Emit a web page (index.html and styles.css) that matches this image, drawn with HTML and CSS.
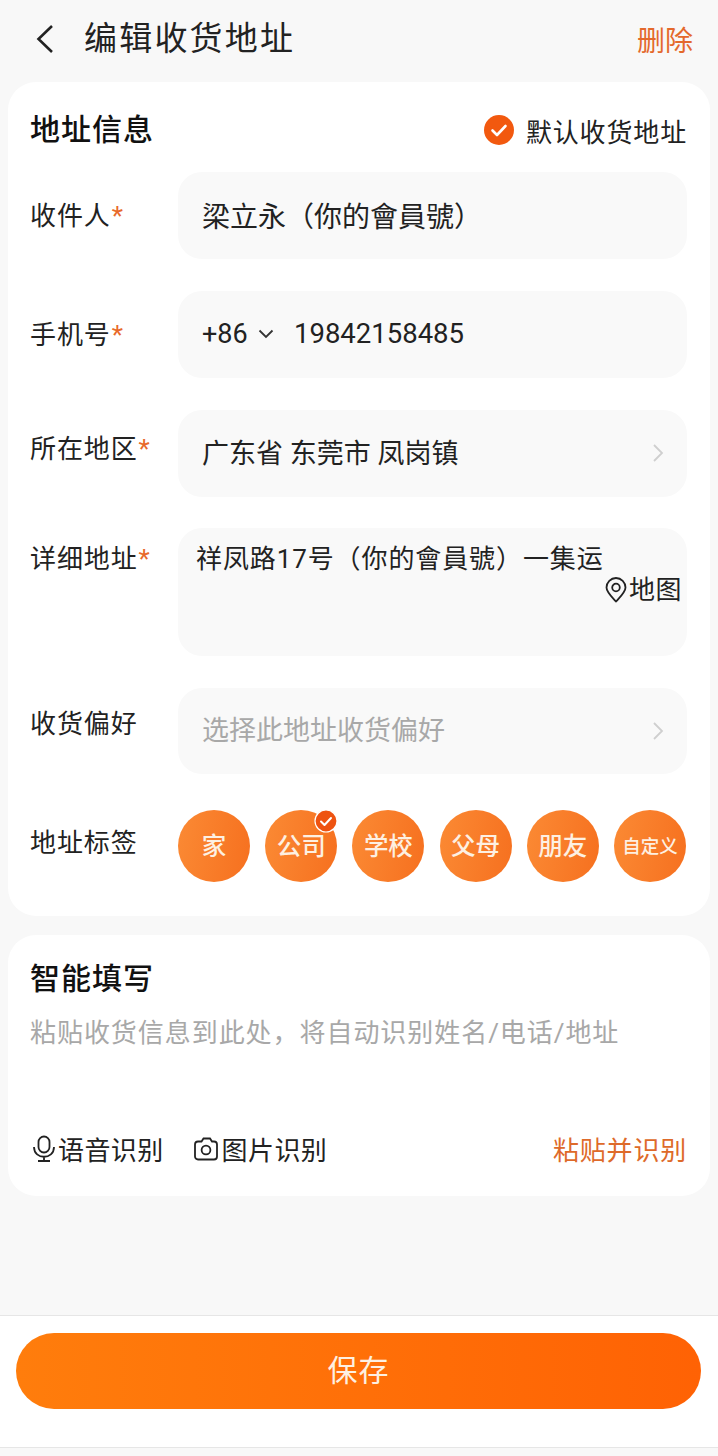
FILE: index.html
```html
<!DOCTYPE html>
<html>
<head>
  <meta charset="UTF-8">
  <title>编辑收货地址</title>
  <link rel="stylesheet" href="styles.css">
</head>
<body>
<div class="page">
  <div class="topbar">
    <svg class="back" width="20" height="30" viewBox="0 0 20 30"><path d="M17 2 L3.5 15 L17 28" fill="none" stroke="#222" stroke-width="2.6"/></svg>
    <h1>编辑收货地址</h1>
    <span class="delete">删除</span>
  </div>

  <div class="card card-address">
    <div class="card-head">
      <h2>地址信息</h2>
      <div class="default-addr">
        <svg width="30" height="30" viewBox="0 0 30 30"><circle cx="15" cy="15" r="15" fill="#f2590f"/><path d="M8.5 15.5 L13 20 L21.5 11" fill="none" stroke="#fff" stroke-width="2.6" stroke-linecap="round" stroke-linejoin="round"/></svg>
        <span>默认收货地址</span>
      </div>
    </div>

    <div class="row">
      <div class="label label-1">收件人<em>*</em></div>
      <div class="field field-name">梁立永（你的會員號）</div>
    </div>
    <div class="row">
      <div class="label label-2">手机号<em>*</em></div>
      <div class="field field-phone">
        <span>+86</span>
        <svg class="caret" width="16" height="10" viewBox="0 0 16 10"><path d="M1.5 1.5 L8 8 L14.5 1.5" fill="none" stroke="#333" stroke-width="1.8"/></svg>
        <span>19842158485</span>
      </div>
    </div>
    <div class="row row-region">
      <div class="label label-3">所在地区<em>*</em></div>
      <div class="field field-link">
        <span>广东省 东莞市 凤岗镇</span>
        <svg width="12" height="20" viewBox="0 0 12 20"><path d="M2 2 L10 10 L2 18" fill="none" stroke="#cfcfcf" stroke-width="1.8"/></svg>
      </div>
    </div>
    <div class="row">
      <div class="label label-4">详细地址<em>*</em></div>
      <div class="field field-detail">
        <div class="detail-text">祥凤路17号（你的會員號）一集运</div>
        <div class="map-link">
          <svg width="22" height="26" viewBox="0 0 22 26"><path d="M11 24.5 C6 19 1.5 15 1.5 10.5 A9.5 9.5 0 0 1 20.5 10.5 C20.5 15 16 19 11 24.5 Z" fill="none" stroke="#222" stroke-width="1.8"/><circle cx="11" cy="10.5" r="3.8" fill="none" stroke="#222" stroke-width="1.8"/></svg>
          <span>地图</span>
        </div>
      </div>
    </div>
    <div class="row">
      <div class="label label-5">收货偏好</div>
      <div class="field field-link field-hint">
        <span>选择此地址收货偏好</span>
        <svg width="12" height="20" viewBox="0 0 12 20"><path d="M2 2 L10 10 L2 18" fill="none" stroke="#cfcfcf" stroke-width="1.8"/></svg>
      </div>
    </div>
    <div class="row row-tags">
      <div class="label label-6">地址标签</div>
      <div class="tags">
        <div class="tag">家</div>
        <div class="tag">公司
          <svg class="tag-check" width="24" height="24" viewBox="0 0 24 24"><circle cx="12" cy="12" r="11" fill="#ee5311" stroke="#fff" stroke-width="1.2"/><path d="M7 12.5 L10.5 16 L17 9" fill="none" stroke="#fff" stroke-width="2" stroke-linecap="round" stroke-linejoin="round"/></svg>
        </div>
        <div class="tag">学校</div>
        <div class="tag">父母</div>
        <div class="tag">朋友</div>
        <div class="tag tag-small">自定义</div>
      </div>
    </div>
  </div>

  <div class="card card-smart">
    <h2>智能填写</h2>
    <div class="smart-hint">粘贴收货信息到此处，将自动识别姓名/电话/地址</div>
    <div class="smart-actions">
      <div class="action action-voice">
        <svg width="24" height="28" viewBox="0 0 24 28"><rect x="6.5" y="1.5" width="11" height="16" rx="5.5" fill="none" stroke="#222" stroke-width="1.8"/><path d="M2 12 C2 25 22 25 22 12 M12 21.5 V26 M6 26 H18" fill="none" stroke="#222" stroke-width="1.8"/></svg>
        <span>语音识别</span>
      </div>
      <div class="action">
        <svg width="24" height="26" viewBox="0 0 24 26"><path d="M4 5.5 H7.5 L9.5 2.5 H16 L18 5.5 H20 A3 3 0 0 1 23 8.5 V20.5 A3 3 0 0 1 20 23.5 H4 A3 3 0 0 1 1 20.5 V8.5 A3 3 0 0 1 4 5.5 Z" fill="none" stroke="#222" stroke-width="1.8"/><circle cx="12" cy="14" r="4.4" fill="none" stroke="#222" stroke-width="1.8"/></svg>
        <span>图片识别</span>
      </div>
      <div class="paste">粘贴并识别</div>
    </div>
  </div>

  <div class="footer">
    <button type="button" class="save">保存</button>
  </div>
</div>
</body>
</html>
```

FILE: styles.css
```css
* { box-sizing: border-box; }
html, body { margin: 0; padding: 0; }
body { font-family: Roboto, "Noto Sans CJK SC", sans-serif; color: #222; background: #f8f8f8; }
.page { width: 718px; height: 1456px; display: flex; flex-direction: column; }

.topbar { height: 82px; padding: 0 25px 5px 35px; display: flex; align-items: center; flex: none; }
.back { margin-right: 30px; }
h1 { font-size: 33px; font-weight: 400; letter-spacing: 2.2px; margin: 0; flex: 1; line-height: 44px; margin-left: -1px; }
.delete { font-size: 28px; color: #e4692c; }

.card { background: #fff; margin: 0 8px; border-radius: 28px; flex: none; }
.card-address { height: 834px; padding: 0 23px; }
.card-head { height: 90px; padding-top: 6px; display: flex; align-items: center; justify-content: space-between; }
h2 { font-size: 30px; font-weight: 500; letter-spacing: 1px; margin: 0 0 0 -1px; color: #111; line-height: 40px; }
.default-addr { display: flex; align-items: center; gap: 12px; font-size: 26px; letter-spacing: 0.85px; }

.row { display: flex; align-items: flex-start; margin-bottom: 32px; }
.row-region { margin-bottom: 31px; }
.label { width: 147px; flex: none; font-size: 26px; line-height: 34px; white-space: nowrap; letter-spacing: 0.9px; margin-left: -1px; margin-right: 1px; }
.label em { color: #e8692a; font-style: normal; margin-left: 1px; }
.label-1 { padding-top: 27px; }
.label-2 { padding-top: 27px; }
.label-3 { padding-top: 22px; }
.label-4 { padding-top: 14px; }
.label-5 { padding-top: 19px; }
.label-6 { padding-top: 16px; }

.field { flex: 1; height: 87px; background: #f9f9f9; border-radius: 24px; padding: 0 24px; display: flex; align-items: center; font-size: 27px; white-space: nowrap; }
.field-name { font-size: 28px; padding-bottom: 2px; }
.field-phone { padding-bottom: 2px; }
.field-phone span:first-child { width: 46px; }
.field-phone span:last-child { font-size: 27.5px; }
.caret { margin: 0 20px 0 10px; }
.field-link { justify-content: space-between; padding-right: 23px; }
.field-link span { padding-bottom: 4px; }
.field-hint { color: #a8a8a8; height: 86px; }
.field-hint span { padding-bottom: 5px; }
.field-link svg { margin-bottom: 1px; }
.field-detail { height: 128px; display: block; padding: 14px 5px 0 18px; }
.detail-text { font-size: 26px; line-height: 34px; letter-spacing: 0.9px; }
.map-link { display: flex; justify-content: flex-end; align-items: center; gap: 2px; font-size: 26px; letter-spacing: 0.5px; line-height: 28px; }

.row-tags { margin-bottom: 0; margin-top: 36px; }
.tags { flex: 1; display: flex; justify-content: space-between; margin-right: 1px; }
.tag { width: 72px; height: 72px; border-radius: 50%; padding-bottom: 3px; background: linear-gradient(100deg, #fb8a34, #f6701f); color: #fdf0e2; font-size: 24.5px; font-weight: 500; display: flex; align-items: center; justify-content: center; position: relative; }
.tag-small { font-size: 18.5px; }
.tag-check { position: absolute; top: -1px; right: -1px; }

.card-smart { margin-top: 19px; height: 261px; padding: 24px 23px 0; }
.smart-hint { color: #a8a8a8; font-size: 26px; letter-spacing: 0.95px; line-height: 34px; margin-top: 17px; margin-left: -1px; }
.smart-actions { display: flex; align-items: center; margin-top: 80px; font-size: 26px; letter-spacing: 0.4px; }
.action { display: flex; align-items: center; gap: 4px; margin-right: 30px; }
.action-voice { gap: 2px; margin-left: 1px; }
.paste { margin-left: auto; color: #de6a2a; letter-spacing: 0.8px; }

.footer { margin-top: 119px; height: 133px; background: #fff; border-top: 1px solid #e6e6e6; border-bottom: 1px solid #e6e6e6; padding: 17px 17px 0 16px; flex: none; }
.save { display: block; width: 100%; height: 76px; padding: 0 0 6px; border: 0; border-radius: 38px; background: linear-gradient(90deg, #ff7d0c, #ff6204); color: #fdf0e2; font-family: inherit; font-size: 30px; letter-spacing: 1px; }
```
